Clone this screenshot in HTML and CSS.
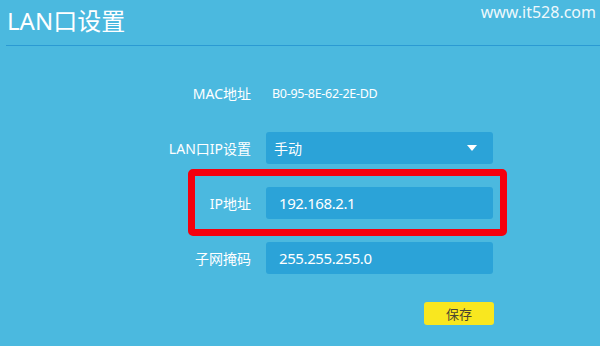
FILE: index.html
```html
<!DOCTYPE html>
<html lang="zh-CN">
<head>
    <meta charset="UTF-8">
    <meta name="viewport" content="width=device-width, initial-scale=1.0">
    <title>LAN口设置</title>
    <link rel="stylesheet" href="styles.css">
</head>
<body>
    <div class="header">
        <h1>LAN口设置</h1>
        <span class="site">www.it528.com</span>
    </div>
    <form class="settings">
        <div class="row">
            <label>MAC地址</label>
            <span class="mac">B0-95-8E-62-2E-DD</span>
        </div>
        <div class="row">
            <label>LAN口IP设置</label>
            <div class="select">
                <span>手动</span>
                <span class="arrow"></span>
            </div>
        </div>
        <div class="row highlighted">
            <span class="highlight"></span>
            <label for="ip">IP地址</label>
            <input type="text" id="ip" value="192.168.2.1">
        </div>
        <div class="row">
            <label for="mask">子网掩码</label>
            <input type="text" id="mask" value="255.255.255.0">
        </div>
        <div class="actions">
            <button type="button" class="save">保存</button>
        </div>
    </form>
</body>
</html>
```

FILE: styles.css
```css
body {
    margin: 0;
    background-color: #4bb9df;
    color: #fff;
    font-family: "Noto Sans", "Noto Sans CJK SC", sans-serif;
    height: 346px;
    overflow: hidden;
}
.header {
    display: flex;
    justify-content: space-between;
    align-items: flex-start;
    height: 45px;
    margin-left: 6px;
    padding-right: 4px;
    border-bottom: 1px solid #2b9ad3;
}
h1 {
    margin: 0;
    padding: 4px 0 0 1px;
    font-size: 24px;
    font-weight: normal;
    line-height: 34px;
}
.site {
    padding-top: 1px;
    font-size: 16px;
    line-height: 22px;
    color: #eef8fc;
}
.settings {
    padding-top: 31px;
}
.row {
    display: flex;
    align-items: center;
    gap: 15px;
    width: 493px;
    height: 32px;
    margin-bottom: 23px;
    position: relative;
}
.row label {
    width: 251px;
    text-align: right;
    font-size: 14px;
}
.mac {
    padding-left: 6px;
    font-size: 12.5px;
    letter-spacing: -0.3px;
}
.select, .row input {
    box-sizing: border-box;
    width: 227px;
    height: 32px;
    border: none;
    border-radius: 3px;
    background-color: #2ba3d8;
    color: #fff;
    font-family: inherit;
}
.select {
    display: flex;
    justify-content: space-between;
    align-items: center;
    padding: 0 16px 0 8px;
    font-size: 14px;
}
.arrow {
    width: 0;
    height: 0;
    border-left: 5px solid transparent;
    border-right: 5px solid transparent;
    border-top: 6px solid #fff;
}
.row input {
    padding: 0 0 0 13px;
    font-size: 15px;
    letter-spacing: -0.4px;
    outline: none;
}
.highlight {
    position: absolute;
    top: -18px;
    bottom: -17px;
    left: 188px;
    right: -14px;
    border: 7px solid #f5000d;
    border-radius: 5px;
}
.actions {
    display: flex;
    justify-content: flex-end;
    width: 494px;
    margin-top: 28px;
}
.save {
    width: 70px;
    height: 23px;
    border: none;
    border-radius: 3px;
    background-color: #f9e71f;
    color: #4a4630;
    font-family: inherit;
    font-size: 13px;
    padding: 0;
}
```
